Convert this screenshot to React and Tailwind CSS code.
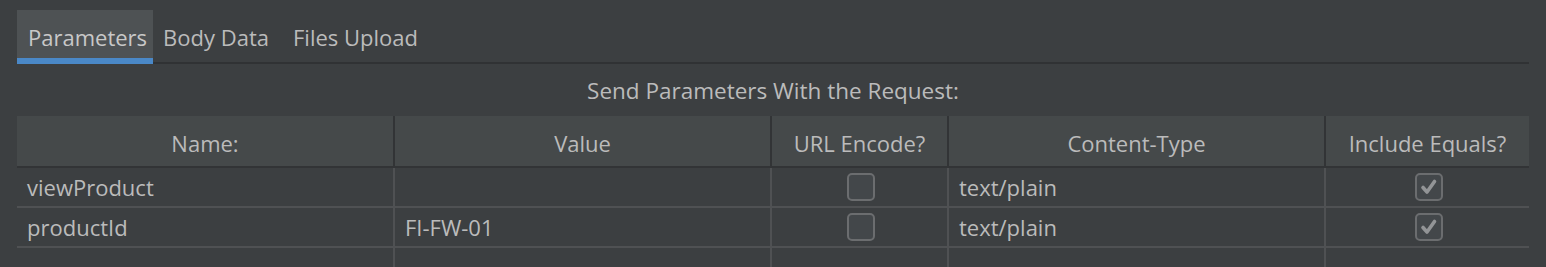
import React, { useState } from 'react';

const font = { fontFamily: '"Open Sans", "Noto Sans", sans-serif' };

const columns = ['Name:', 'Value', 'URL Encode?', 'Content-Type', 'Include Equals?'];

const initialRows = [
  { name: 'viewProduct', value: '', encode: false, type: 'text/plain', equals: true },
  { name: 'productId', value: 'FI-FW-01', encode: false, type: 'text/plain', equals: true },
];

function CheckBox({ checked, onChange }) {
  return (
    <button
      type="button"
      onClick={onChange}
      className="w-[28px] h-[28px] rounded-[5px] border-2 border-[#6b6d6f] bg-[#43474a] flex items-center justify-center"
    >
      {checked && (
        <svg width="20" height="20" viewBox="0 0 20 20" fill="none">
          <path d="M4 10.5 L8 15 L15.5 4.5" stroke="#929496" strokeWidth="3.6" strokeLinecap="round" strokeLinejoin="round" />
        </svg>
      )}
    </button>
  );
}

export default function App() {
  const [tab, setTab] = useState('Parameters');
  const [rows, setRows] = useState(initialRows);

  const toggle = (i, key) => {
    setRows(rows.map((r, idx) => (idx === i ? { ...r, [key]: !r[key] } : r)));
  };

  const grid = 'grid grid-cols-[378px_377px_177px_377px_203px]';

  return (
    <div className="w-[1546px] h-[267px] bg-[#3c3f41] text-[#bbbbbb] text-[22px] px-[17px] pt-[10px] overflow-hidden" style={font}>
      {/* Tabs */}
      <div className="flex h-[54px] shadow-[inset_0_-2px_0_#303234]">
        {['Parameters', 'Body Data', 'Files Upload'].map((t) => (
          <button
            key={t}
            type="button"
            onClick={() => setTab(t)}
            className={
              tab === t
                ? 'h-[54px] pl-[11px] pr-[6px] bg-[#4e5254] border-b-[6px] border-[#4a88c7] text-[#c8c8c8] leading-none pt-[5px]'
                : 'h-[54px] pl-[10px] pr-[14px] border-b-[6px] border-transparent leading-none pt-[5px]'
            }
          >
            {t}
          </button>
        ))}
      </div>

      {/* Title */}
      <div className="h-[52px] flex items-center justify-center pt-[2px] text-[22.5px]">Send Parameters With the Request:</div>

      {/* Table */}
      <div className={`${grid} bg-[#45494a] h-[52px] border-b-2 border-[#323436]`}>
        {columns.map((c, i) => (
          <div
            key={c}
            className={`flex items-center justify-center pt-[4px] ${i < columns.length - 1 ? 'border-r-2 border-[#323436]' : ''}`}
          >
            {c}
          </div>
        ))}
      </div>

      {rows.map((r, i) => (
        <div key={r.name} className={`${grid} h-[40px] border-b-2 border-[#4f5153]`}>
          <div className="flex items-center pl-[10px] border-r-2 border-[#4f5153]">{r.name}</div>
          <div className="flex items-center pl-[10px] border-r-2 border-[#4f5153]">{r.value}</div>
          <div className="flex items-center justify-center pl-[3px] border-r-2 border-[#4f5153]">
            <CheckBox checked={r.encode} onChange={() => toggle(i, 'encode')} />
          </div>
          <div className="flex items-center pl-[10px] border-r-2 border-[#4f5153]">{r.type}</div>
          <div className="flex items-center justify-center pl-[3px]">
            <CheckBox checked={r.equals} onChange={() => toggle(i, 'equals')} />
          </div>
        </div>
      ))}

      <div className={`${grid} h-[40px]`}>
        <div className="border-r-2 border-[#4f5153]" />
        <div className="border-r-2 border-[#4f5153]" />
        <div className="border-r-2 border-[#4f5153]" />
        <div className="border-r-2 border-[#4f5153]" />
        <div />
      </div>
    </div>
  );
}
